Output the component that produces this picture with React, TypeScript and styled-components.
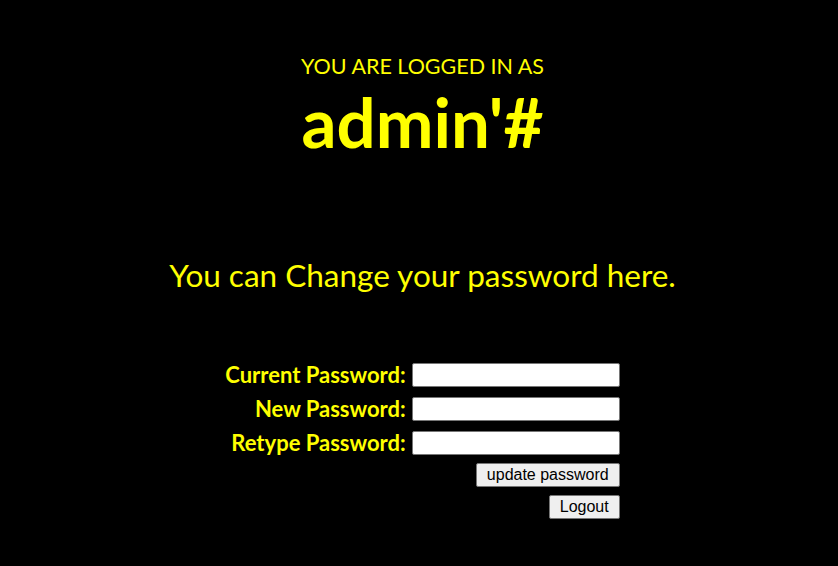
import React from 'react';
import styled, { createGlobalStyle } from 'styled-components';

const GlobalStyle = createGlobalStyle`
  html, body {
    margin: 0;
    padding: 0;
    background: #000;
  }
  body {
    font-family: Lato, "Liberation Sans", sans-serif;
    color: #ffff00;
  }
`;

const fields = ['Current Password:', 'New Password:', 'Retype Password:'];

const App = () => {
  return (
    <Page>
      <GlobalStyle />
      <Header>
        <Subtitle>YOU ARE LOGGED IN AS</Subtitle>
        <UserName>admin'#</UserName>
      </Header>

      <Message>You can Change your password here.</Message>

      <PasswordForm onSubmit={(e) => e.preventDefault()}>
        {fields.map((label) => (
          <FieldRow key={label}>
            <FieldLabel>{label}</FieldLabel>
            <FieldInput type="password" />
          </FieldRow>
        ))}
        <ButtonRow>
          <FormButton type="submit">update password</FormButton>
        </ButtonRow>
        <ButtonRow>
          <FormButton type="button">Logout</FormButton>
        </ButtonRow>
      </PasswordForm>
    </Page>
  );
};

const Page = styled.div`
  width: 838px;
  height: 566px;
  padding-left: 7px;
  box-sizing: border-box;
  display: flex;
  flex-direction: column;
  align-items: center;
  overflow: hidden;
`;

const Header = styled.div`
  display: flex;
  flex-direction: column;
  align-items: center;
  padding-top: 51px;
`;

const Subtitle = styled.div`
  font-size: 21.5px;
  line-height: 30px;
`;

const UserName = styled.div`
  font-size: 69px;
  font-weight: 700;
  line-height: 78px;
  margin-top: 2px;
`;

const Message = styled.div`
  font-size: 31.5px;
  line-height: 40px;
  margin-top: 94px;
`;

const PasswordForm = styled.form`
  display: grid;
  grid-template-columns: auto 208px;
  column-gap: 6px;
  row-gap: 10px;
  margin-top: 68px;
`;

const FieldRow = styled.div`
  display: contents;
`;

const FieldLabel = styled.label`
  font-size: 22px;
  font-weight: 700;
  text-align: right;
  line-height: 24px;
`;

const FieldInput = styled.input`
  width: 208px;
  height: 24px;
  box-sizing: border-box;
  border: 1px solid #767676;
  border-radius: 2px;
  background: #fff;
  padding: 1px 2px;
`;

const ButtonRow = styled.div`
  grid-column: 1 / 3;
  display: flex;
  justify-content: flex-end;
  margin-top: -2px;
`;

const FormButton = styled.button`
  font-family: "Liberation Sans", Arial, sans-serif;
  font-size: 16px;
  height: 24px;
  box-sizing: border-box;
  padding: 1px 10px;
  background: #efefef;
  color: #000;
  border: 1px solid #767676;
  border-radius: 2px;
`;

export default App;
